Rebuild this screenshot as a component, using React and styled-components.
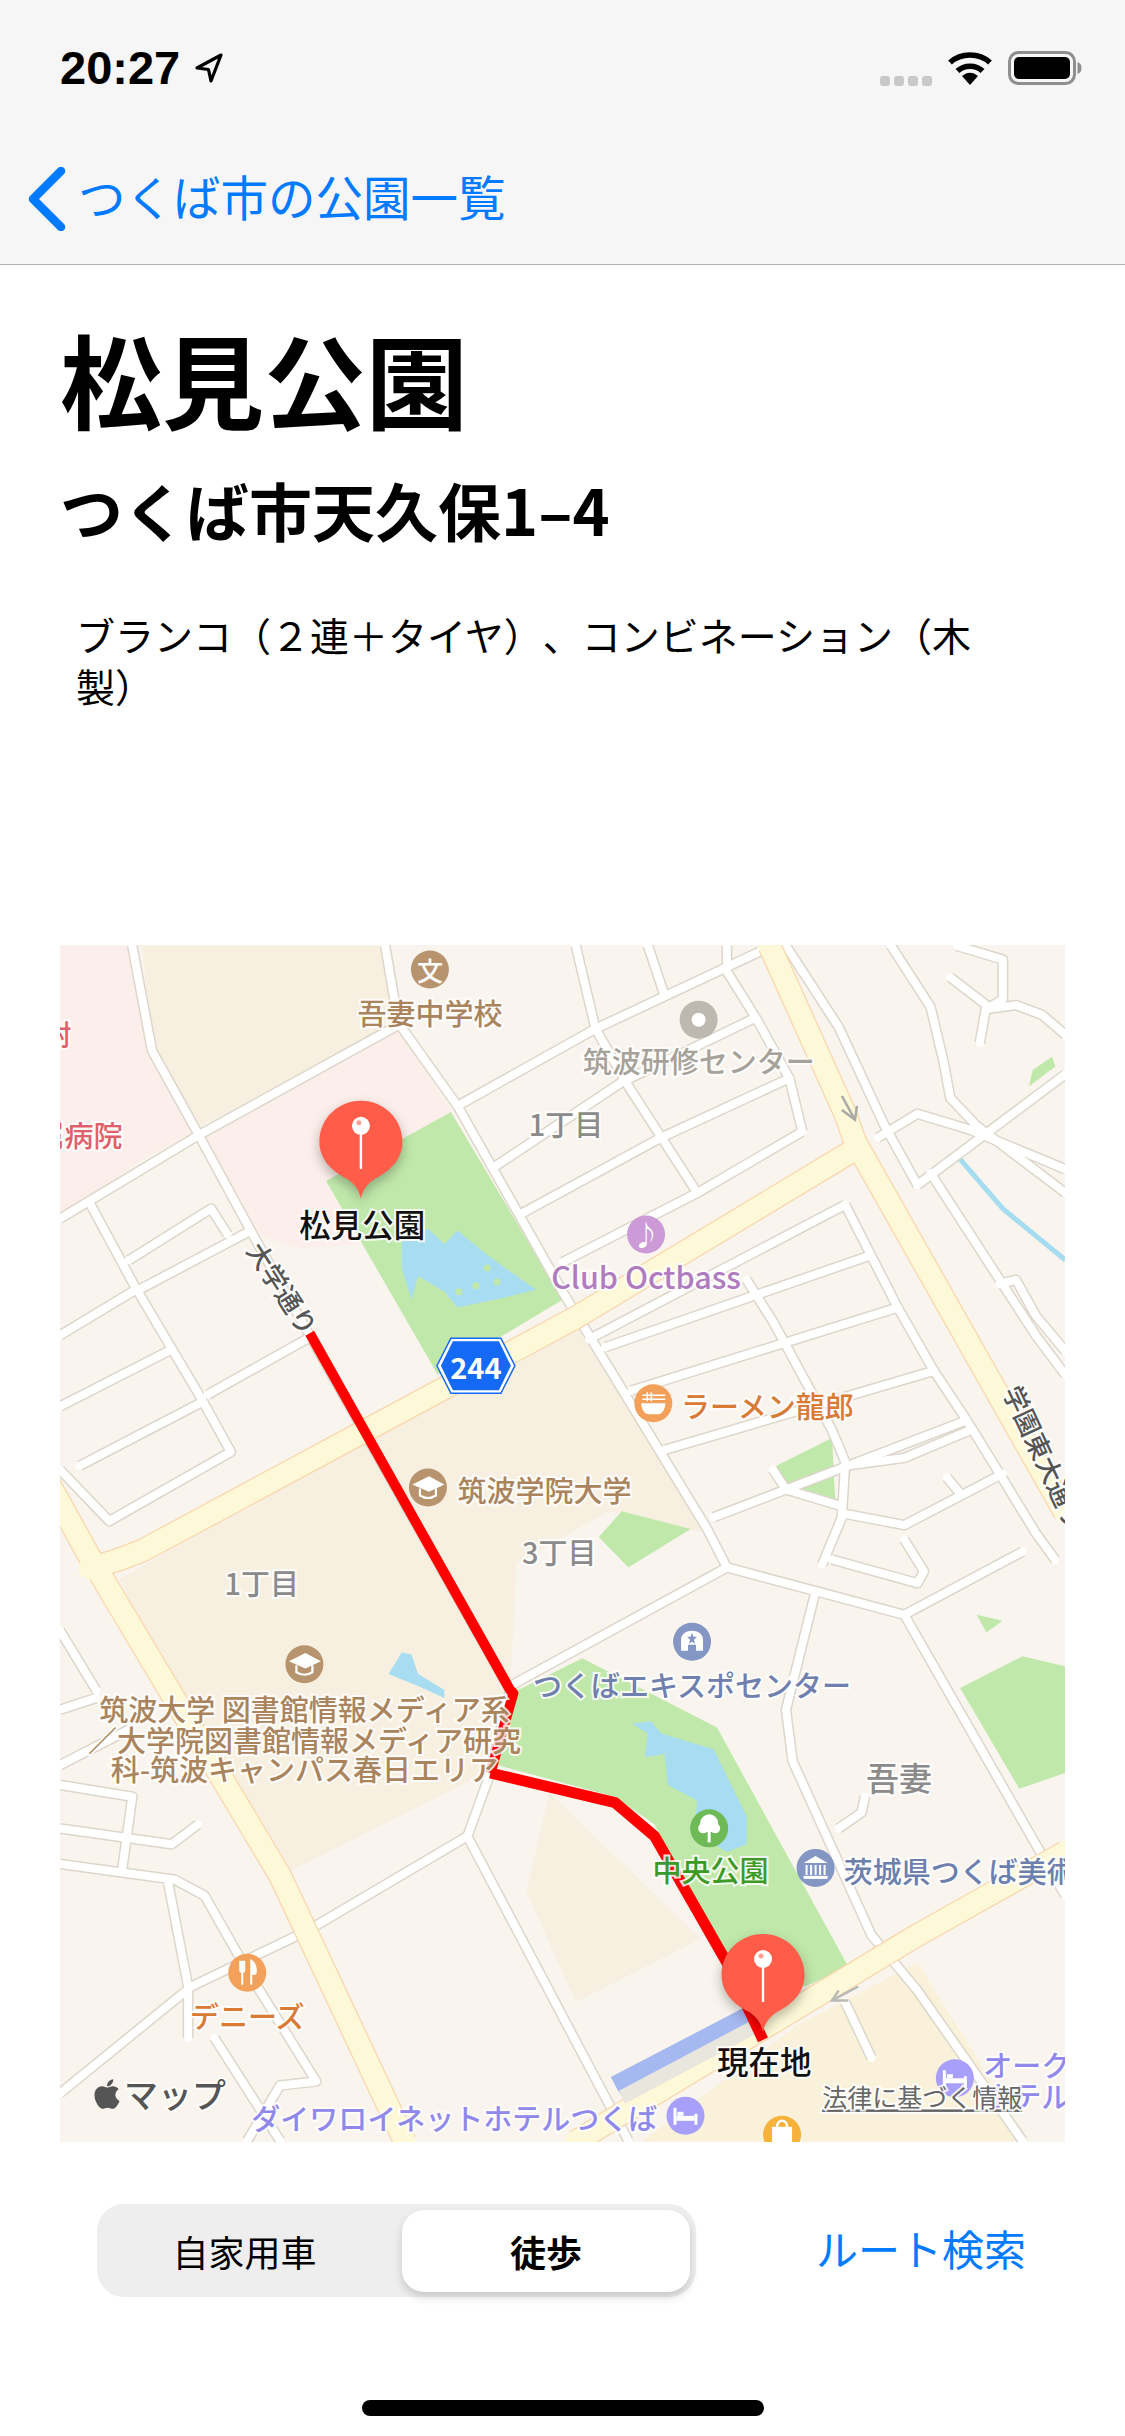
import React from 'react'
import styled, { createGlobalStyle } from 'styled-components'
import { FaApple } from 'react-icons/fa'

const GlobalStyle = createGlobalStyle`
  html, body {
    margin: 0;
    background: #fff;
  }
  body {
    font-family: "Noto Sans CJK JP", "Noto Sans", sans-serif;
    text-spacing-trim: space-all;
  }
`

// map data was read off the reference crops, so it is kept in crop units
const LOWER = 1517
const X = (x) => (x - 15) / 1.522
const Y = (y) => (y - 13) / 2.529
const line = (str, dy = 0) =>
  str
    .split(' ')
    .map((p) => {
      const [x, y] = p.split(',').map(Number)
      return `${X(x).toFixed(1)},${Y(y + dy).toFixed(1)}`
    })
    .join(' ')
const up = (list) => list.map((s) => line(s))
const low = (list) => list.map((s) => line(s, LOWER))

const campus = [
  ...up([
    '140,15 510,15 530,210 230,470 155,280',
    '105,1617 800,965 1000,1500 850,1445 710,1577 700,1897 650,2117 345,2372',
  ]),
  ...low(['760,640 990,1010 800,1170 725,890']),
]
const tanRight = low(['1135,1230 1320,1070 1490,1522 900,1522'])
const pink = up([
  '15,15 135,15 155,280 215,490 145,550 50,660 15,690',
  '240,500 530,220 610,435 420,610 470,770 380,780 300,740',
])
const parks = [
  ...up([
    '610,435 780,910 590,1100 420,610',
    '1190,1260 1195,1420 1120,1390 1105,1330',
    '870,1445 975,1490 880,1587 835,1510',
    '1525,295 1530,320 1490,370 1495,330',
  ]),
  ...low([
    '1410,190 1450,205 1425,235',
    '1480,295 1545,320 1545,590 1475,630 1385,375',
    '810,300 700,390 680,570 860,650 920,720 1030,1080 1150,1130 1215,1080 1015,475',
  ]),
]
const water = [
  ...up(['535,760 575,730 600,770 620,735 660,790 680,815 740,885 690,905 620,930 600,890 560,850 550,910 535,830']),
  ...low([
    '885,465 915,460 930,490 1010,530 1060,700 1060,770 1030,790 980,740 985,660 940,620 935,540 925,545 905,550 910,490',
    '515,340 535,285 550,290 560,340 600,380 600,400 560,370',
  ]),
]
const islets = [[665, 830], [680, 865], [648, 875], [622, 890]]
const highways = [
  ...up([
    '1095,15 1210,440 1225,510 1545,1450',
    '1225,530 800,955 470,1250 140,1545 105,1567 60,1590',
    '0,1380 60,1560 350,2367 540,3039',
  ]),
  ...low(['800,1522 1320,1000 1545,790']),
]
const streets = [
  ...up([
    '15,705 225,495 530,215',
    '620,420 830,225 1080,30',
    '510,15 530,210 620,420 780,890 1000,1490 1030,1587',
    '125,15 155,280 225,490 310,750 700,1897 670,2107 635,2267',
    '60,665 130,880 230,1160 275,1295 90,1470 15,1340',
    '15,1000 130,885',
    '15,1180 180,1040',
    '45,1330 230,1170',
    '135,885 300,740',
    '120,810 245,680 270,745',
    '240,1150 390,1010',
    '680,570 870,360 1070,200',
    '720,690 930,500 1125,350',
    '780,815 985,640 1145,485',
    '800,15 830,225 880,370 985,640',
    '910,15 935,140',
    '1030,15 1030,80 1075,200 1125,350 1145,485',
    '820,1010 1210,670',
    '845,1030 1245,800',
    '885,1140 1290,930',
    '935,1290 1345,1090',
    '1010,1460 1395,1215',
    '1060,860 1100,965 1190,1240 1210,1320 1205,1460 1175,1580',
    '1210,670 1290,930 1345,1090 1395,1215 1445,1350 1500,1500 1530,1568',
    '1100,1340 1120,1390 1200,1430',
    '1210,1330 1300,1310 1400,1240',
    '1205,1450 1300,1480 1450,1350',
    '1365,1360 1385,1400',
    '1120,15 1200,220 1270,470 1320,620',
    '1280,15 1340,170 1360,310 1370,400 1410,470 1545,640',
    '1370,95 1425,165 1415,260',
    '1380,15 1450,50 1450,150 1425,175',
    '1425,175 1470,165 1510,190 1545,240',
    '1260,500 1320,440 1400,480 1545,580',
    '1545,340 1320,620',
    '1340,590 1500,1000 1545,1100',
    '1445,870 1470,860 1500,950 1545,1040',
  ]),
  ...low([
    '1030,70 1300,190 1480,30',
    '1030,70 700,370',
    '1165,130 1120,430 1130,560 1250,1000 1320,1140 1480,1520',
    '1300,190 1500,770 1545,900',
    '1190,50 1320,110 1330,80 1300,0',
    '1200,730 1235,690 1240,650',
    '1210,1170 1250,1310',
    '635,750 390,990 215,1130 15,1400',
    '635,750 880,1520',
    '15,620 125,650 110,830',
    '15,730 185,770 225,720',
    '15,820 190,860 235,900 300,1090 405,1370 350,1380 300,1520',
    '180,870 210,1130 210,1260',
    '250,1260 350,1520',
    '15,230 70,380',
    '15,430 70,400',
    '15,570 120,480',
  ]),
]
const routeUpper = line('395,995 700,1897 705,1905 670,2107')
const routeLower = line('670,2107 860,2182 920,2267 1030,2587 1085,2782')

const Page = styled.div`
  width: 1125px;
  height: 2436px;
  display: flex;
  flex-direction: column;
  background: #fff;
  overflow: hidden;
`

const Header = styled.header`
  height: 264px;
  background: #f6f6f6;
  border-bottom: 1px solid #b2b2b2;
  display: flex;
  flex-direction: column;
`

const StatusBar = styled.div`
  height: 136px;
  padding: 0 43px 0 60px;
  display: flex;
  align-items: center;
  justify-content: space-between;
`

const TimeGroup = styled.div`
  display: flex;
  align-items: center;
  gap: 14px;
`

const Time = styled.span`
  font-family: "Liberation Sans", sans-serif;
  font-weight: 700;
  font-size: 47px;
  line-height: 50px;
  color: #000;
`

const StatusIcons = styled.div`
  display: flex;
  align-items: center;
  gap: 15px;
`

const Signal = styled.div`
  display: flex;
  gap: 4px;
  margin-top: 26px;
`

const SignalDot = styled.span`
  width: 10px;
  height: 10px;
  border-radius: 3px;
  background: #c9c9c9;
`

const NavBar = styled.nav`
  display: flex;
  align-items: center;
  gap: 11px;
  padding: 0 0 0 27px;
  height: 125px;
`

const BackLabel = styled.span`
  color: #007aff;
  font-size: 47.5px;
  line-height: 60px;
  margin-top: -6px;
`

const Details = styled.main`
  padding: 53px 0 0 60px;
`

const Title = styled.h1`
  margin: 0;
  font-size: 102px;
  line-height: 120px;
  font-weight: 700;
  color: #000;
`

const Address = styled.h2`
  margin: 31px 0 0;
  font-size: 63px;
  line-height: 80px;
  font-weight: 700;
  color: #000;
`

const Equipment = styled.p`
  margin: 60px 0 0 16px;
  width: 920px;
  height: 102px;
  font-size: 39px;
  line-height: 51px;
  font-weight: 400;
  color: #000;
`

const MapFrame = styled.svg`
  display: block;
  width: 1005px;
  height: 1197px;
  margin: 234px 0 0 60px;
  background: #f9f5ee;
  flex: none;
`

const Label = styled.text`
  font-family: "Noto Sans CJK JP", "Noto Sans", sans-serif;
  font-size: ${(p) => p.$size || 29}px;
  font-weight: ${(p) => p.$weight || 500};
  fill: ${(p) => p.$color};
  stroke: rgba(255, 255, 255, 0.85);
  stroke-width: 4px;
  paint-order: stroke;
  dominant-baseline: central;
  text-anchor: ${(p) => p.$anchor || 'middle'};
  text-decoration: ${(p) => (p.$underline ? 'underline' : 'none')};
`

const IconText = styled(Label)`
  stroke: none;
`

const PinShape = styled.g`
  filter: drop-shadow(0 5px 6px rgba(0, 0, 0, 0.28));
`

const Controls = styled.div`
  display: flex;
  align-items: center;
  margin: 62px 0 0 97px;
`

const Segmented = styled.div`
  width: 599px;
  height: 93px;
  box-sizing: border-box;
  padding: 6px 6px 5px 6px;
  border-radius: 27px;
  background: #eeeeee;
  display: grid;
  grid-template-columns: 1fr 288px;
`

const Segment = styled.div`
  display: flex;
  align-items: center;
  justify-content: center;
  font-size: 36px;
  color: #000;
  font-weight: ${(p) => (p.$active ? 700 : 400)};
  padding-right: ${(p) => (p.$active ? 0 : 16)}px;
  background: ${(p) => (p.$active ? '#fff' : 'transparent')};
  border-radius: 22px;
  box-shadow: ${(p) => (p.$active ? '0 5px 10px rgba(0, 0, 0, 0.16)' : 'none')};
`

const RouteLink = styled.a`
  margin: -6px 0 0 120px;
  color: #007aff;
  font-size: 42px;
  line-height: 56px;
`

const HomeBar = styled.div`
  width: 402px;
  height: 16px;
  margin: 103px auto 0;
  border-radius: 8px;
  background: #000;
`

const Pin = ({ x, y }) => (
  <PinShape transform={`translate(${X(x)} ${Y(y)})`}>
    <path
      d="M0 0 C-2 -9 -6 -15 -14 -20 C-30 -28 -41.5 -40 -41.5 -57 C-41.5 -80 -23 -98 0 -98 C23 -98 41.5 -80 41.5 -57 C41.5 -40 30 -28 14 -20 C6 -15 2 -9 0 0 Z"
      fill="#ff5c49"
    />
    <rect x="-1.2" y="-70" width="2.4" height="40" fill="#fff" />
    <circle cy="-73" r="9" fill="#fff" />
    <circle cx="-2" cy="-76" r="2.5" fill="#ff9d8f" />
  </PinShape>
)

const Poi = ({ x, y, color, children }) => (
  <g transform={`translate(${X(x)} ${Y(y)})`}>
    <circle r="19" fill={color} />
    {children}
  </g>
)

const GradCap = () => (
  <g fill="none" stroke="#fff" strokeWidth="2.2">
    <path d="M-13 -3 L1 -10 L14 -3 L1 3 Z" fill="#fff" />
    <path d="M-8 1 V8 Q0 13 8 8 V1" />
  </g>
)

const Bed = () => (
  <g fill="#fff">
    <rect x="-12" y="-8" width="3" height="17" />
    <rect x="9" y="-2" width="3" height="11" />
    <rect x="-9" y="0" width="18" height="5" />
    <rect x="-8" y="-4" width="6" height="4" />
  </g>
)

function StreetMap() {
  return (
    <MapFrame viewBox="0 0 1005 1197">
      {campus.map((p) => <polygon key={p} points={p} fill="#f7f0e1" />)}
      {tanRight.map((p) => <polygon key={p} points={p} fill="#f9f1d9" />)}
      {pink.map((p) => <polygon key={p} points={p} fill="#fceeea" />)}
      {parks.map((p) => <polygon key={p} points={p} fill="#c1e8ab" />)}
      {water.map((p) => <polygon key={p} points={p} fill="#a8dcf0" />)}
      {islets.map(([x, y]) => <circle key={x} cx={X(x)} cy={Y(y)} r="3.5" fill="#c1e8ab" />)}
      <polyline points={line('1380,545 1450,680 1545,810')} fill="none" stroke="#a5dcf0" strokeWidth="5" />

      {streets.map((p) => (
        <polyline key={p} points={p} fill="none" stroke="#ddd6ca" strokeWidth="11" strokeLinejoin="round" />
      ))}
      {streets.map((p) => (
        <polyline key={p} points={p} fill="none" stroke="#fff" strokeWidth="8" strokeLinejoin="round" strokeLinecap="round" />
      ))}
      {highways.map((p) => (
        <polyline key={p} points={p} fill="none" stroke="#f9d6ac" strokeWidth="24" strokeLinejoin="round" />
      ))}
      {highways.map((p) => (
        <polyline key={p} points={p} fill="none" stroke="#fdf9d8" strokeWidth="21.5" strokeLinejoin="round" strokeLinecap="round" />
      ))}

      <polyline points={line('860,1380 1080,1190', LOWER)} fill="none" stroke="#a5b8f0" strokeWidth="19" />
      <polyline points={line('870,1410 1080,1225', LOWER)} fill="none" stroke="#e8e6dd" strokeWidth="14" />
      <polyline points={routeUpper} fill="none" stroke="#ff0000" strokeWidth="10" strokeLinejoin="round" />
      <polyline points={routeLower} fill="none" stroke="#ff0000" strokeWidth="11" strokeLinejoin="round" />

      <polyline points={line('1205,395 1225,455')} fill="none" stroke="#a9a9a5" strokeWidth="2.5" />
      <polyline points={line('1205,430 1225,455 1228,420')} fill="none" stroke="#a9a9a5" strokeWidth="2.5" />
      <polyline points={line('1230,1130 1190,1165', LOWER)} fill="none" stroke="#b9b9b5" strokeWidth="2.5" />
      <polyline points={line('1215,1165 1190,1165 1200,1140', LOWER)} fill="none" stroke="#b9b9b5" strokeWidth="2.5" />

      {/* upper half labels */}
      <Poi x={578} y={75} color="#b8946e">
        <IconText $size={26} $color="#fff" x="0" y="0">文</IconText>
      </Poi>
      <Label $color="#a9845c" x={X(578)} y={Y(183)}>吾妻中学校</Label>
      <Poi x={987} y={202} color="#bdb9b1"><circle r="7" fill="#fff" /></Poi>
      <Label $color="#a6a29a" x={X(987)} y={Y(303)}>筑波研修センター</Label>
      <Label $color="#8b8b8b" x={X(785)} y={Y(463)}>1丁目</Label>
      <Label $color="#e0606a" $anchor="end" x={X(32)} y={Y(235)}>筑波大学附</Label>
      <Label $color="#e0606a" $anchor="end" x={X(110)} y={Y(490)}>属病院</Label>
      <Label $color="#555" $size={26} x={X(355)} y={Y(880)} transform={`rotate(57 ${X(355)} ${Y(880)})`}>大学通り</Label>
      <Label $color="#555" $size={26} $anchor="start" x={X(1465)} y={Y(1130)} transform={`rotate(65 ${X(1465)} ${Y(1130)})`}>学園東大通り</Label>
      <Poi x={907} y={745} color="#cc9ad6">
        <IconText $size={28} $color="#fff" x="0" y="0">♪</IconText>
      </Poi>
      <Label $color="#b07cc0" $size={30.5} x={X(907)} y={Y(850)}>Club Octbass</Label>
      <Poi x={918} y={1172} color="#f3a05a">
        <path d="M-12 0 H12 C12 8 7 11 5 11 H-5 C-7 11 -12 8 -12 0 Z" fill="#fff" />
        <path d="M-11 -8 H12 M-11 -4 H12 M-6 -11 V-2 M-2 -11 V-2" stroke="#fff" strokeWidth="1.6" />
      </Poi>
      <Label $color="#d97a35" $anchor="start" x={X(960)} y={Y(1177)}>ラーメン龍郎</Label>
      <Poi x={575} y={1385} color="#b8946e"><GradCap /></Poi>
      <Label $color="#a9845c" $anchor="start" x={X(620)} y={Y(1390)}>筑波学院大学</Label>
      <Label $color="#8b8b8b" x={X(775)} y={Y(1545)}>3丁目</Label>

      <g transform={`translate(${X(648)} ${Y(1077)})`}>
        <polygon points="-39,0 -25,-27.5 25,-27.5 39,0 25,27.5 -25,27.5" fill="#fff" stroke="#1469f5" strokeWidth="1.5" />
        <polygon points="-35,0 -23,-24.5 23,-24.5 35,0 23,24.5 -23,24.5" fill="#1469f5" />
        <IconText $size={29} $weight={700} $color="#fff" x="0" y="0">244</IconText>
      </g>

      {/* lower half labels */}
      <Label $color="#8b8b8b" x={X(322)} y={Y(108 + LOWER)}>1丁目</Label>
      <Poi x={387} y={315 + LOWER} color="#b8946e"><GradCap /></Poi>
      <Label $color="#a9845c" x={X(387)} y={Y(425 + LOWER)}>筑波大学 図書館情報メディア系</Label>
      <Label $color="#a9845c" x={X(387)} y={Y(503 + LOWER)}>／大学院図書館情報メディア研究</Label>
      <Label $color="#a9845c" x={X(387)} y={Y(578 + LOWER)}>科-筑波キャンパス春日エリア</Label>
      <Poi x={977} y={258 + LOWER} color="#8496c4">
        <path d="M-11 9 V-2 C-11 -14 11 -14 11 -2 V9 H4 V3 H-4 V9 Z" fill="#fff" />
        <path d="M0 -9 L1.5 -5 L5 -5 L2 -2 L3 2 L0 0 L-3 2 L-2 -2 L-5 -5 L-1.5 -5 Z" fill="#8496c4" />
      </Poi>
      <Label $color="#6f7fae" x={X(977)} y={Y(365 + LOWER)}>つくばエキスポセンター</Label>
      <Label $color="#8b8b8b" $size={33} x={X(1292)} y={Y(600 + LOWER)}>吾妻</Label>
      <Poi x={1003} y={730 + LOWER} color="#6dba57">
        <circle cy="-5" r="9" fill="#fff" />
        <circle cx="-6" cy="0" r="5" fill="#fff" />
        <circle cx="6" cy="0" r="5" fill="#fff" />
        <rect x="-1.5" y="2" width="3" height="12" fill="#fff" />
      </Poi>
      <Label $color="#3c9a25" x={X(1005)} y={Y(832 + LOWER)}>中央公園</Label>
      <Poi x={1165} y={830 + LOWER} color="#8496c4">
        <path d="M0 -12 L12 -5 H-12 Z" fill="#fff" />
        <path d="M-9 -3 V7 M-4.5 -3 V7 M0 -3 V7 M4.5 -3 V7 M9 -3 V7" stroke="#fff" strokeWidth="2" />
        <rect x="-12" y="8" width="24" height="3" fill="#fff" />
      </Poi>
      <Label $color="#6c7fad" $anchor="start" x={X(1208)} y={Y(835 + LOWER)}>茨城県つくば美術館</Label>
      <Poi x={300} y={1095 + LOWER} color="#f3a05a">
        <path d="M-7 -12 V-3 C-7 0 -3 0 -3 -3 V-12 M-5 -12 V12" stroke="#fff" strokeWidth="2" fill="none" />
        <path d="M4 12 V-12 C9 -9 9 -1 8 1 H4" fill="#fff" stroke="#fff" strokeWidth="2" />
      </Poi>
      <Label $color="#d97a35" x={X(300)} y={Y(1203 + LOWER)}>デニーズ</Label>
      <Poi x={967} y={1457 + LOWER} color="#a79ffa"><Bed /></Poi>
      <Label $color="#9088ea" x={X(615)} y={Y(1460 + LOWER)}>ダイワロイネットホテルつくば</Label>
      <Poi x={1377} y={1362 + LOWER} color="#a79ffa"><Bed /></Poi>
      <Label $color="#9088ea" $anchor="start" x={X(1420)} y={Y(1325 + LOWER)}>オークラ</Label>
      <Label $color="#9088ea" $anchor="start" x={X(1420)} y={Y(1405 + LOWER)}>ホテル</Label>
      <Poi x={1114} y={1505 + LOWER} color="#f7b23c">
        <rect x="-10" y="-8" width="20" height="17" fill="#fff" />
        <path d="M-5 -8 C-5 -16 5 -16 5 -8" fill="none" stroke="#fff" strokeWidth="2.5" />
      </Poi>
      <Label $color="#666" $size={25} $weight={400} $anchor="start" $underline x={X(1175)} y={Y(1408 + LOWER)}>法律に基づく情報</Label>

      <FaApple x="30" y="1132" size={34} color="#555" />
      <Label $color="#555" $size={34} $anchor="start" x="64" y={Y(1400 + LOWER)}>マップ</Label>

      <Pin x={473} y={655} />
      <Label $color="#111" $size={31.5} x={X(475)} y={Y(717)}>松見公園</Label>
      <Pin x={1085} y={1245 + LOWER} />
      <Label $color="#111" $size={31.5} x={X(1087)} y={Y(1317 + LOWER)}>現在地</Label>
    </MapFrame>
  )
}

export default function App() {
  return (
    <Page>
      <GlobalStyle />
      <Header>
        <StatusBar>
          <TimeGroup>
            <Time>20:27</Time>
            <svg width="30" height="32" viewBox="0 0 30 32">
              <path d="M27 3 L3 16 L14.5 17.5 L17 29 Z" fill="none" stroke="#000" strokeWidth="3.2" strokeLinejoin="round" />
            </svg>
          </TimeGroup>
          <StatusIcons>
            <Signal>
              <SignalDot /><SignalDot /><SignalDot /><SignalDot />
            </Signal>
            <svg width="46" height="34" viewBox="0 0 46 34">
              <path d="M23 34 L15 25 C20 20.5 26 20.5 31 25 Z" fill="#000" />
              <path d="M10.5 20 C17 13.5 29 13.5 35.5 20" fill="none" stroke="#000" strokeWidth="5.5" />
              <path d="M3 11.5 C14 1.5 32 1.5 43 11.5" fill="none" stroke="#000" strokeWidth="5.5" />
            </svg>
            <svg width="74" height="34" viewBox="0 0 74 34">
              <rect x="1.5" y="1.5" width="65" height="31" rx="9" fill="none" stroke="#8e8e8e" strokeWidth="3" />
              <rect x="6" y="6" width="56" height="22" rx="5" fill="#000" />
              <path d="M69.5 11 C72.5 12 73.5 14 73.5 17 C73.5 20 72.5 22 69.5 23 Z" fill="#8e8e8e" />
            </svg>
          </StatusIcons>
        </StatusBar>
        <NavBar>
          <svg width="40" height="64" viewBox="0 0 40 64">
            <path d="M34 4 L6 32 L34 60" fill="none" stroke="#007aff" strokeWidth="8.5" strokeLinecap="round" strokeLinejoin="round" />
          </svg>
          <BackLabel>つくば市の公園一覧</BackLabel>
        </NavBar>
      </Header>
      <Details>
        <Title>松見公園</Title>
        <Address>つくば市天久保1–4</Address>
        <Equipment>ブランコ（２連＋タイヤ）、コンビネーション（木製）</Equipment>
      </Details>
      <StreetMap />
      <Controls>
        <Segmented>
          <Segment>自家用車</Segment>
          <Segment $active>徒歩</Segment>
        </Segmented>
        <RouteLink>ルート検索</RouteLink>
      </Controls>
      <HomeBar />
    </Page>
  )
}
